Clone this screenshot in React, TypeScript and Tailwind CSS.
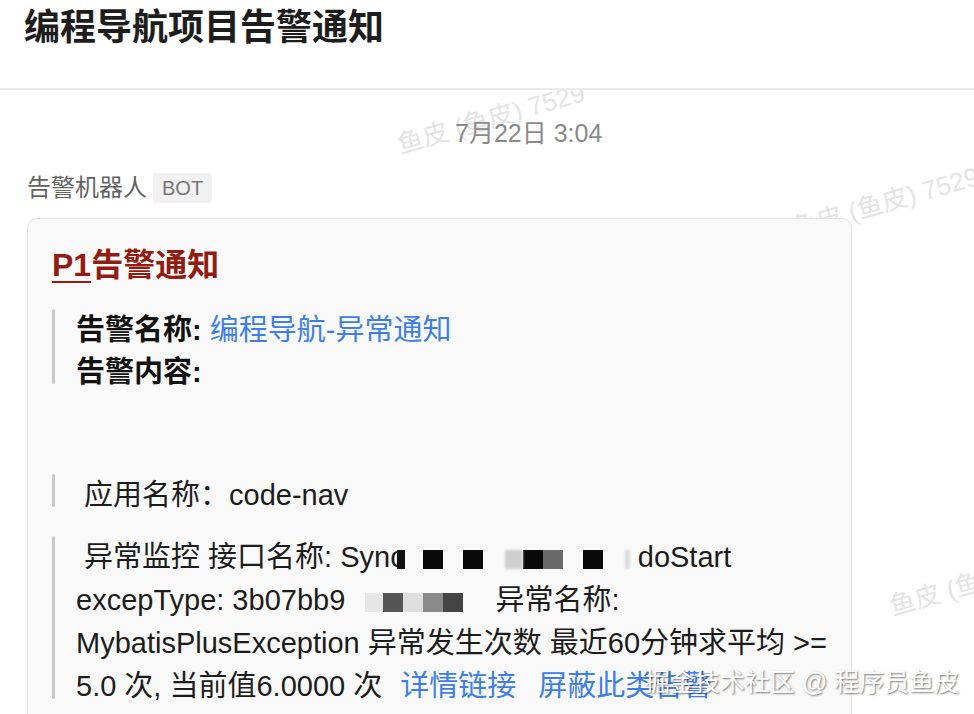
const FONT = "font-['Liberation_Sans','Noto_Sans_CJK_SC',sans-serif]";

function Watermark({ className }: { className: string }) {
  return (
    <span
      className={`pointer-events-none absolute origin-left -rotate-[16deg] whitespace-nowrap text-[26px] leading-[30px] text-[#e4e4e4] ${className}`}
    >
      鱼皮 (鱼皮) 7529
    </span>
  );
}

function Quote({ children, className = "" }: { children: React.ReactNode; className?: string }) {
  return (
    <div className={`flex ${className}`}>
      <div className="w-[3px] shrink-0 rounded-full bg-[#c9c9c9] mb-[9px]" />
      <div className="pl-[21px] text-[29px] leading-[42px] text-[#1c1c1c] whitespace-pre">{children}</div>
    </div>
  );
}

function Sq({ c, w = 20, className = "" }: { c: string; w?: number; className?: string }) {
  return <span className={`inline-block h-[19px] align-[-2px] ${className}`} style={{ background: c, width: w }} />;
}

export default function App() {
  return (
    <div className={`w-[974px] h-[714px] overflow-hidden bg-white flex flex-col ${FONT}`}>
      <header className="h-[90px] shrink-0 border-b-2 border-[#ececec] pl-[24px] pt-[10px]">
        <h1 className="text-[36px] leading-[36px] font-bold text-[#1d1d1d]">编程导航项目告警通知</h1>
      </header>

      <main className="relative flex-1 overflow-hidden">
        <Watermark className="left-[398px] top-[40px]" />
        <Watermark className="left-[792px] top-[124px]" />
        <Watermark className="left-[890px] top-[502px]" />

        <div className="relative pl-[455px] pt-[28px] text-[25px] leading-[30px] text-[#8a8a8a]">7月22日 3:04</div>

        <div className="relative mt-[25px] flex items-center gap-[6px] pl-[27px]">
          <span className="text-[24px] leading-[30px] text-[#636363]">告警机器人</span>
          <span className="rounded-[4px] bg-[#f1f1f1] px-[9px] text-[20px] leading-[30px] text-[#777]">BOT</span>
        </div>

        <section className="relative z-10 ml-[27px] mt-[15px] w-[825px] h-[520px] rounded-[10px] border border-[#e3e3e3] bg-[#f9f9f9] px-[24px] pt-[26px]">
          <h2 className="text-[32px] leading-[40px] font-bold text-[#931c12]">
            <span className="underline decoration-2 underline-offset-[5px]">P1</span>告警通知
          </h2>

          <Quote className="mt-[24px]">
            <div>
              <b className="text-[#111]">告警名称: </b>
              <span className="text-[#3d7fe6]">编程导航-异常通知</span>
            </div>
            <div>
              <b className="text-[#111]">告警内容:</b>
            </div>
          </Quote>

          <Quote className="mt-[81px]">
            <div> 应用名称：code-nav</div>
          </Quote>

          <Quote className="mt-[20px]">
            <div className="leading-[43px]">
              {" 异常监控 接口名称: Sync"}
              <Sq c="#111" w={8} className="-ml-[8px]" />
              <Sq c="#0a0a0a" className="ml-[18px]" />
              <Sq c="#0a0a0a" className="ml-[20px]" />
              <Sq c="#cfcfcf" w={18} className="ml-[22px] blur-[1px]" />
              <Sq c="#0a0a0a" />
              <Sq c="#6a6a6a" />
              <Sq c="#0a0a0a" className="ml-[20px]" />
              <Sq c="#dcdcdc" w={5} className="ml-[22px] blur-[1px]" />
              {" doStart"}
            </div>
            <div className="leading-[43px]">
              {"excepType: 3b07bb9"}
              <Sq c="#e6e6e6" w={18} className="ml-[20px]" />
              <Sq c="#555" />
              <Sq c="#dedede" />
              <Sq c="#8a8a8a" />
              <Sq c="#444" />
              {"    异常名称:"}
            </div>
            <div className="leading-[43px]">MybatisPlusException 异常发生次数 最近60分钟求平均 &gt;=</div>
            <div className="leading-[43px]">
              5.0 次, 当前值6.0000 次
              <span className="ml-[18px] text-[#3d7fe6]">详情链接</span>
              <span className="ml-[22px] text-[#3d7fe6]">屏蔽此类告警</span>
            </div>
          </Quote>
        </section>

        <span className="absolute z-20 left-[645px] top-[577px] whitespace-nowrap text-[25px] leading-[30px] text-white [text-shadow:1px_1px_2px_rgba(0,0,0,0.55)]">
          掘金技术社区 @ 程序员鱼皮
        </span>
      </main>
    </div>
  );
}
